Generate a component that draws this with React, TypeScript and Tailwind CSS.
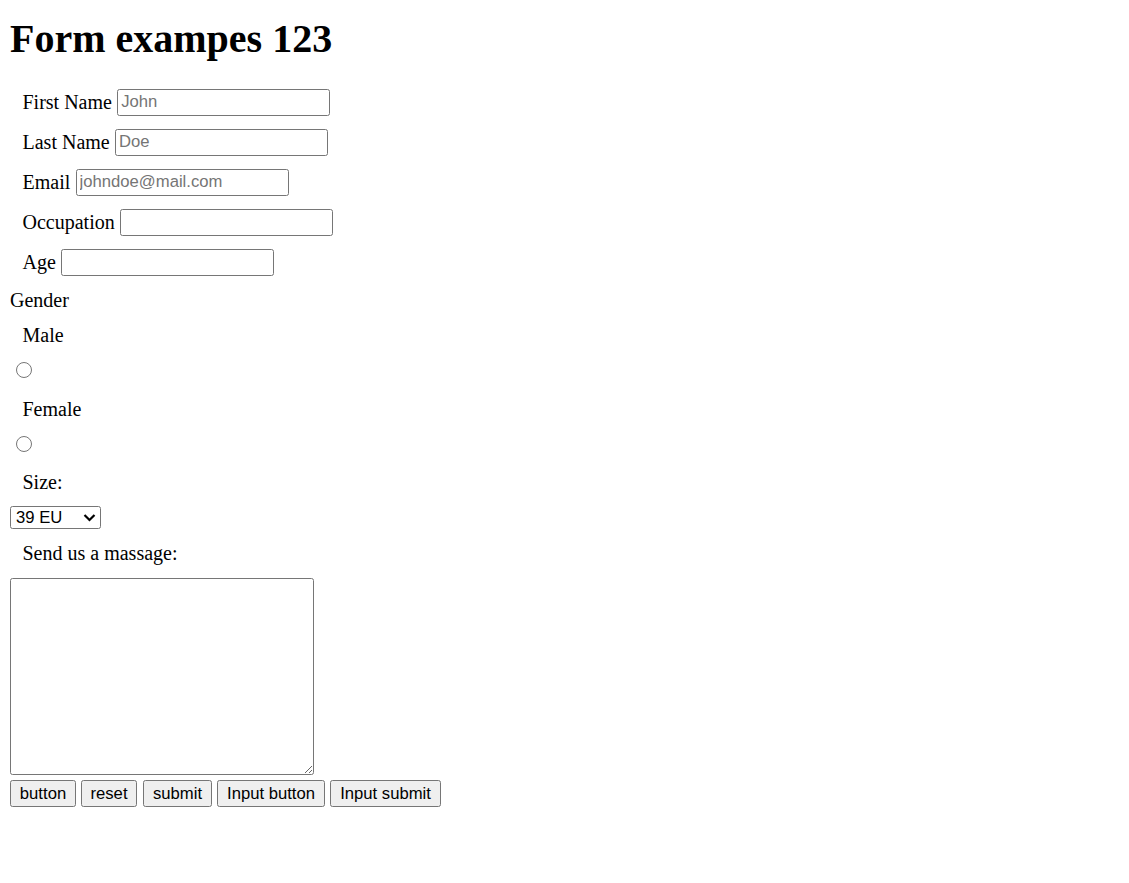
import React from "react";

const fields = [
  { label: "First Name", placeholder: "John" },
  { label: "Last Name", placeholder: "Doe" },
  { label: "Email", placeholder: "johndoe@mail.com" },
  { label: "Occupation", placeholder: "" },
  { label: "Age", placeholder: "" },
];

const buttons = [
  { text: "button", w: "w-[66px]", mr: "mr-[5px]" },
  { text: "reset", w: "w-[56px]", mr: "mr-[6px]" },
  { text: "submit", w: "w-[69px]", mr: "mr-[5px]" },
  { text: "Input button", w: "w-[108px]", mr: "mr-[5px]" },
  { text: "Input submit", w: "w-[111px]", mr: "" },
];

export default function App() {
  return (
    <div className="min-h-screen bg-white pt-[16.5px] pl-[10px] text-black font-['Liberation_Serif','Times_New_Roman',serif] text-[20px] leading-[22.14px]">
      <h1 className="text-[40px] font-bold leading-[44.28px]">Form exampes 123</h1>

      <form className="mt-[28.3px] flex flex-col items-start gap-[13.33px]">
        {fields.map((f) => (
          <div key={f.label} className="flex h-[26.67px] items-center gap-[5.3px] pl-[12.5px]">
            <label>{f.label}</label>
            <input
              type="text"
              placeholder={f.placeholder}
              className="h-full w-[213px] rounded-[2.5px] border border-[#767676] bg-white px-[3px] font-['Liberation_Sans',Arial,sans-serif] text-[16.67px] placeholder:text-[#757575]"
            />
          </div>
        ))}

        <div>Gender</div>
        <label className="pl-[12.5px]">Male</label>
        <div className="h-[24.3px]">
          <input type="radio" name="gender" className="ml-[6.25px] mt-[2.5px] h-[16px] w-[16px]" />
        </div>
        <label className="pl-[12.5px]">Female</label>
        <div className="h-[24.3px]">
          <input type="radio" name="gender" className="ml-[6.25px] mt-[2.5px] h-[16px] w-[16px]" />
        </div>

        <label className="pl-[12.5px]">Size:</label>
        <div className="flex h-[22.67px] w-[91px] items-center justify-between rounded-[2.5px] border border-[#767676] bg-white pl-[5px] pr-[4px] pt-[1px] font-['Liberation_Sans',Arial,sans-serif] text-[16.67px] leading-[19px]">
          <span>39 EU</span>
          <svg width="13" height="9" viewBox="0 0 13 9" className="mb-[1px]">
            <path d="M1.5 2 L6.5 7 L11.5 2" fill="none" stroke="#000" strokeWidth="2.2" />
          </svg>
        </div>

        <label className="pl-[12.5px]">Send us a massage:</label>
        <div className="flex flex-col items-start gap-[5.5px]">
          <textarea className="h-[197px] w-[304px] rounded-[2.5px] border border-[#767676] bg-white font-['Liberation_Mono',monospace] text-[16.67px]" />
          <div className="flex">
            {buttons.map((b) => (
              <button
                key={b.text}
                type="button"
                className={`${b.w} ${b.mr} h-[26.67px] rounded-[2.5px] border border-[#767676] bg-[#efefef] text-center font-['Liberation_Sans',Arial,sans-serif] text-[16.67px] leading-[19px]`}
              >
                {b.text}
              </button>
            ))}
          </div>
        </div>
      </form>
    </div>
  );
}
